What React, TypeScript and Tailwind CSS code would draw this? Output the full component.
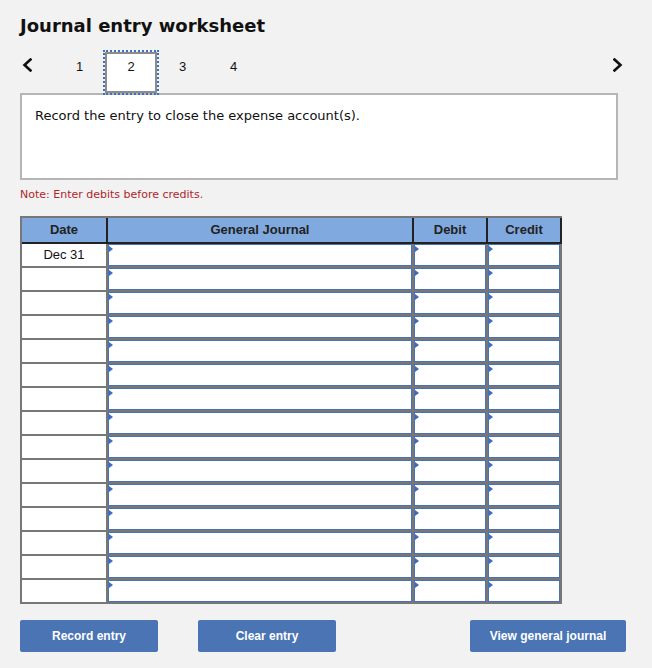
const ROWS = 15

function Chevron({ dir }: { dir: "left" | "right" }) {
  return (
    <svg width="10" height="14" viewBox="0 0 10 14" fill="none">
      <polyline
        points={dir === "left" ? "8.5,1.5 2.5,7 8.5,12.5" : "1.5,1.5 7.5,7 1.5,12.5"}
        stroke="#111"
        strokeWidth="2.6"
        strokeLinecap="square"
      />
    </svg>
  )
}

function InputCell() {
  return (
    <div className="relative bg-white border border-[#4a72b8]">
      <span className="absolute top-[1px] left-0 w-0 h-0 border-y-[3px] border-y-transparent border-l-[4px] border-l-[#3b6cc1]" />
    </div>
  )
}

export default function App() {
  const tabs = ["1", "2", "3", "4"]
  return (
    <div className="w-[652px] h-[668px] bg-[#f2f2f2] text-[#111] font-['Liberation_Sans',Arial,sans-serif]">
      <div className="px-5 pt-[15px]">
        <h1 className="text-[18px] leading-[22px] font-bold font-['DejaVu_Sans',Verdana,sans-serif]">
          Journal entry worksheet
        </h1>

        {/* step tabs */}
        <div className="mt-[15px] h-[40px] flex items-start">
          <div className="ml-[2px] mt-[6px]">
            <Chevron dir="left" />
          </div>
          <div className="ml-[22px] flex">
            {tabs.map((t) => (
              <div
                key={t}
                className={`h-[41px] pt-[5px] border-2 text-center text-[13px] leading-[16px] ${
                  t === "2"
                    ? "w-[52px] bg-white border-[#8c8c8c] outline-2 outline-dotted outline-[#3f6fc0]"
                    : "w-[51px] border-transparent"
                }`}
              >
                {t}
              </div>
            ))}
          </div>
          <div className="ml-auto mr-[9px] mt-[6px]">
            <Chevron dir="right" />
          </div>
        </div>

        <div className="mt-px w-[598px] h-[87px] border-2 border-[#b5b5b5] bg-white pl-[13px] pt-[13px] text-[13px] leading-[16px] font-['DejaVu_Sans',Verdana,sans-serif]">
          Record the entry to close the expense account(s).
        </div>

        <p className="mt-[7px] text-[11px] leading-[16px] text-[#b0262a] font-['DejaVu_Sans',Verdana,sans-serif]">
          Note: Enter debits before credits.
        </p>

        {/* journal table */}
        <div className="mt-[13px] w-[542px] border-l-2 border-t-2 border-b-2 border-[#777]">
          <div className="grid grid-cols-[86px_306px_74px_74px] bg-[#80a9df] border-b-2 border-[#222] text-[13px] font-bold text-[#222]">
            <div className="h-[24px] flex items-center justify-center border-r-2 border-[#222]">Date</div>
            <div className="h-[24px] flex items-center justify-center border-r-2 border-[#222]">General Journal</div>
            <div className="h-[24px] flex items-center justify-center border-r-2 border-[#222]">Debit</div>
            <div className="h-[24px] flex items-center justify-center border-r-2 border-[#222]">Credit</div>
          </div>
          <div className="grid grid-cols-[84px_304px_72px_72px] auto-rows-[22px] gap-[2px] bg-[#777] pr-[2px]">
            {Array.from({ length: ROWS }).map((_, i) => (
              <div key={i} className="contents">
                <div className="bg-white flex items-center justify-center text-[13px]">
                  {i === 0 ? "Dec 31" : ""}
                </div>
                <InputCell />
                <InputCell />
                <InputCell />
              </div>
            ))}
          </div>
        </div>

        <div className="mt-4 w-[606px] flex text-[12px] font-bold text-white">
          <button className="w-[138px] h-[32px] rounded-[2px] bg-[#4a74b4]">Record entry</button>
          <button className="ml-10 w-[138px] h-[32px] rounded-[2px] bg-[#4a74b4]">Clear entry</button>
          <button className="ml-auto w-[156px] h-[32px] rounded-[2px] bg-[#4a74b4]">View general journal</button>
        </div>
      </div>
    </div>
  )
}
